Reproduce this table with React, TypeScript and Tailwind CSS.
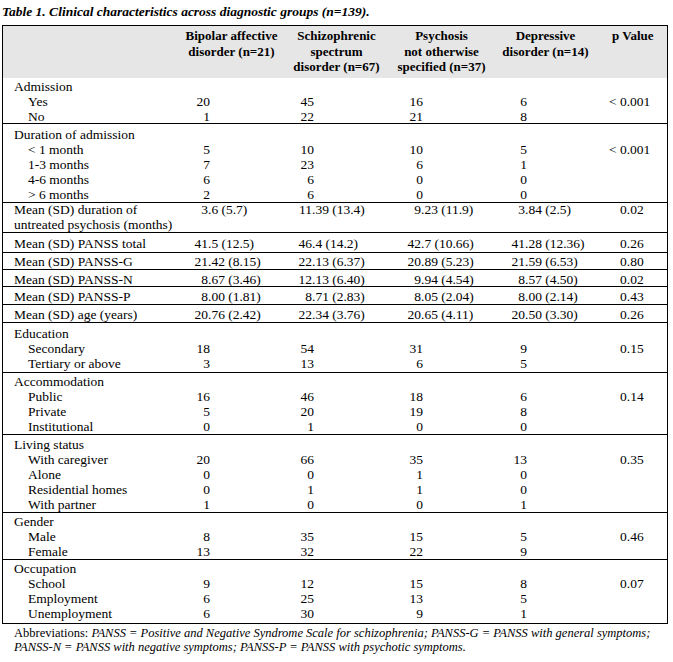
import React from "react";

const intW = ["w-[28px]", "w-[29px]", "w-[31px]", "w-[32px]"];

function Num({ v, col }: { v: string; col: number }) {
  const i = v.indexOf(".");
  const a = i === -1 ? v : v.slice(0, i);
  const b = i === -1 ? "" : v.slice(i);
  return (
    <div className={i === -1 ? "flex whitespace-nowrap pl-[2px]" : "flex whitespace-nowrap"}>
      <span className={`inline-block text-right ${intW[col]}`}>{a}</span>
      <span>{b}</span>
    </div>
  );
}

function P({ v }: { v?: string }) {
  if (!v) return <div />;
  return (
    <div className={v.startsWith("<") ? "pl-[11px] whitespace-nowrap" : "pl-[22px] whitespace-nowrap"}>{v}</div>
  );
}

const grid = "grid grid-cols-[177px_103px_107px_103px_105px_69px]";

type Sub = [string, string, string, string, string, string?];

function Section({ title, rows, cls }: { title: string; rows: Sub[]; cls: string }) {
  return (
    <div className={cls}>
      <div className="pl-[11px] h-[15px]">{title}</div>
      {rows.map((r, k) => (
        <div key={k} className={`${grid} h-[15px]`}>
          <div className="pl-[25px] whitespace-nowrap">{r[0]}</div>
          <Num v={r[1]} col={0} />
          <Num v={r[2]} col={1} />
          <Num v={r[3]} col={2} />
          <Num v={r[4]} col={3} />
          <P v={r[5]} />
        </div>
      ))}
    </div>
  );
}

function Mean({ label, vals, cls }: { label: React.ReactNode; vals: string[]; cls: string }) {
  return (
    <div className={`${grid} ${cls}`}>
      <div className="pl-[11px] whitespace-nowrap">{label}</div>
      <Num v={vals[0]} col={0} />
      <Num v={vals[1]} col={1} />
      <Num v={vals[2]} col={2} />
      <Num v={vals[3]} col={3} />
      <P v={vals[4]} />
    </div>
  );
}

export default function App() {
  return (
    <div className="w-[673px] h-[662px] bg-white text-black overflow-hidden font-[family-name:Liberation_Serif,Times_New_Roman,serif] text-[13.5px] leading-[15px]">
      <div className="pl-[2px] pt-[4px] h-[25px] italic font-bold whitespace-nowrap">
        Table 1. Clinical characteristics across diagnostic groups (n=139).
      </div>
      <div className="ml-[2px] w-[666px] border border-black">
        <div className={`${grid} bg-[#e6e6e6] h-[52px] pt-[2px] font-bold text-[13px] leading-[15.5px]`}>
          <div />
          <div className="text-center">Bipolar affective<br />disorder (n=21)</div>
          <div className="text-center">Schizophrenic<br />spectrum<br />disorder (n=67)</div>
          <div className="text-center">Psychosis<br />not otherwise<br />specified (n=37)</div>
          <div className="text-center">Depressive<br />disorder (n=14)</div>
          <div className="pl-[14px]">p Value</div>
        </div>
        <Section
          title="Admission"
          cls="h-[46px] pt-[1px] border-b border-black"
          rows={[
            ["Yes", "20", "45", "16", "6", "< 0.001"],
            ["No", "1", "22", "21", "8"],
          ]}
        />
        <Section
          title="Duration of admission"
          cls="h-[79px] pt-[3px] border-b border-black"
          rows={[
            ["< 1 month", "5", "10", "10", "5", "< 0.001"],
            ["1-3 months", "7", "23", "6", "1"],
            ["4-6 months", "6", "6", "0", "0"],
            ["> 6 months", "2", "6", "0", "0"],
          ]}
        />
        <Mean
          cls="h-[30px] leading-[14.5px] border-b border-black"
          label={<>Mean (SD) duration of<br />untreated psychosis (months)</>}
          vals={["3.6 (5.7)", "11.39 (13.4)", "9.23 (11.9)", "3.84 (2.5)", "0.02"]}
        />
        <Mean
          cls="h-[20px] pt-[3px] border-b border-black"
          label="Mean (SD) PANSS total"
          vals={["41.5 (12.5)", "46.4 (14.2)", "42.7 (10.66)", "41.28 (12.36)", "0.26"]}
        />
        <Mean
          cls="h-[17px] pt-[1px] border-b border-black"
          label="Mean (SD) PANSS-G"
          vals={["21.42 (8.15)", "22.13 (6.37)", "20.89 (5.23)", "21.59 (6.53)", "0.80"]}
        />
        <Mean
          cls="h-[17px] pt-[2px] border-b border-black"
          label="Mean (SD) PANSS-N"
          vals={["8.67 (3.46)", "12.13 (6.40)", "9.94 (4.54)", "8.57 (4.50)", "0.02"]}
        />
        <Mean
          cls="h-[18px] pt-[2px] border-b border-black"
          label="Mean (SD) PANSS-P"
          vals={["8.00 (1.81)", "8.71 (2.83)", "8.05 (2.04)", "8.00 (2.14)", "0.43"]}
        />
        <Mean
          cls="h-[18px] pt-[2px] border-b border-black"
          label="Mean (SD) age (years)"
          vals={["20.76 (2.42)", "22.34 (3.76)", "20.65 (4.11)", "20.50 (3.30)", "0.26"]}
        />
        <Section
          title="Education"
          cls="h-[50px] pt-[3px] border-b border-black"
          rows={[
            ["Secondary", "18", "54", "31", "9", "0.15"],
            ["Tertiary or above", "3", "13", "6", "5"],
          ]}
        />
        <Section
          title="Accommodation"
          cls="h-[62px] pt-[1px] border-b border-black"
          rows={[
            ["Public", "16", "46", "18", "6", "0.14"],
            ["Private", "5", "20", "19", "8"],
            ["Institutional", "0", "1", "0", "0"],
          ]}
        />
        <Section
          title="Living status"
          cls="h-[78px] pt-[2px] border-b border-black"
          rows={[
            ["With caregiver", "20", "66", "35", "13", "0.35"],
            ["Alone", "0", "0", "1", "0"],
            ["Residential homes", "0", "1", "1", "0"],
            ["With partner", "1", "0", "0", "1"],
          ]}
        />
        <Section
          title="Gender"
          cls="h-[47px] pt-[1px] border-b border-black"
          rows={[
            ["Male", "8", "35", "15", "5", "0.46"],
            ["Female", "13", "32", "22", "9"],
          ]}
        />
        <Section
          title="Occupation"
          cls="h-[63px] pt-[1px]"
          rows={[
            ["School", "9", "12", "15", "8", "0.07"],
            ["Employment", "6", "25", "13", "5"],
            ["Unemployment", "6", "30", "9", "1"],
          ]}
        />
      </div>
      <div className="pl-[14px] pt-[2px] text-[12.5px] leading-[14px]">
        <div className="whitespace-nowrap">
          Abbreviations: <i>PANSS = Positive and Negative Syndrome Scale for schizophrenia; PANSS-G = PANSS with general symptoms;</i>
        </div>
        <div className="whitespace-nowrap">
          <i>PANSS-N = PANSS with negative symptoms; PANSS-P = PANSS with psychotic symptoms.</i>
        </div>
      </div>
    </div>
  );
}
